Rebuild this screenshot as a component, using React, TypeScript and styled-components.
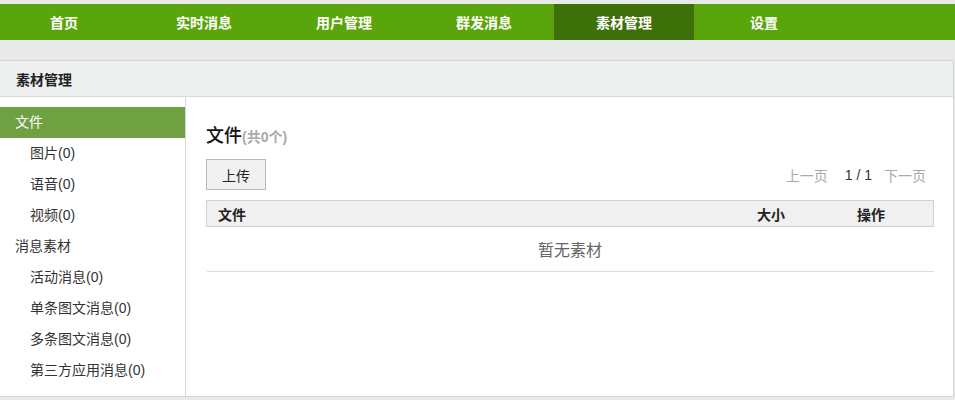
import React from "react";
import styled, { createGlobalStyle } from "styled-components";

const Global = createGlobalStyle`
  html, body { margin: 0; padding: 0; }
  body {
    background: #e8e9e9;
    font-family: "Liberation Sans", Arial, "Noto Sans CJK SC", sans-serif;
    font-size: 14px;
    color: #333;
    overflow: hidden;
  }
`;

const Page = styled.div`
  padding-top: 4px;
  width: 955px;
  height: 400px;
  box-sizing: border-box;
  overflow: hidden;
`;

const Nav = styled.nav`
  display: flex;
  height: 36px;
  background: #5ba50c;
  overflow: hidden;
`;

const NavTrack = styled.div`
  display: flex;
  margin-left: -6px;
`;

const NavItem = styled.a<{ $active?: boolean }>`
  width: 140px;
  height: 36px;
  display: flex;
  align-items: center;
  justify-content: center;
  color: #fff;
  font-weight: bold;
  font-size: 14px;
  text-decoration: none;
  background: ${(p) => (p.$active ? "#3d7008" : "transparent")};
`;

const Panel = styled.section`
  margin: 20px 1px 0 -1px;
  border: 1px solid #d5d5d5;
  background: #fff;
  height: 337px;
  box-sizing: border-box;
  display: flex;
  flex-direction: column;
`;

const PanelHeader = styled.header`
  height: 35px;
  background: #eef0ef;
  border-bottom: 1px solid #d8d8d8;
  display: flex;
  align-items: center;
  padding-left: 16px;
  font-weight: bold;
  font-size: 14px;
  color: #222;
  flex-shrink: 0;
`;

const Body = styled.div`
  display: flex;
  flex: 1;
  min-height: 0;
`;

const Sidebar = styled.ul`
  list-style: none;
  margin: 0;
  padding: 10px 0 0 0;
  width: 185px;
  border-right: 1px solid #d8d8d8;
  flex-shrink: 0;
`;

const SideItem = styled.li<{ $level: number; $active?: boolean }>`
  height: 31px;
  line-height: 31px;
  padding-left: ${(p) => (p.$level === 1 ? 15 : 30)}px;
  background: ${(p) => (p.$active ? "#6fa143" : "transparent")};
  color: ${(p) => (p.$active ? "#fff" : "#333")};
  font-size: 14px;
  cursor: pointer;
`;

const Main = styled.div`
  flex: 1;
  padding: 25px 19px 0 20px;
`;

const Title = styled.h2`
  margin: 0;
  font-size: 18px;
  font-weight: 500;
  color: #111;
  line-height: 24px;
  font-family: "Noto Sans CJK SC", sans-serif;
`;

const Count = styled.span`
  font-size: 14px;
  font-weight: bold;
  color: #aaa;
  font-family: "Liberation Sans", Arial, "Noto Sans CJK SC", sans-serif;
`;

const Toolbar = styled.div`
  display: flex;
  justify-content: space-between;
  align-items: center;
  margin-top: 10px;
`;

const Button = styled.button`
  width: 60px;
  height: 31px;
  background: #f1f1f1;
  border: 1px solid #b9b9b9;
  font-size: 14px;
  color: #222;
  font-family: "Noto Sans CJK SC", sans-serif;
  padding: 0;
`;

const Pager = styled.div`
  display: flex;
  align-items: center;
  margin-right: 8px;
  font-size: 14px;
`;

const PagerLink = styled.span`
  color: #aaa;
`;

const PagerNum = styled.span`
  color: #333;
  margin: 0 12px 0 17px;
`;

const Table = styled.table`
  margin-top: 10px;
  width: 100%;
  border-collapse: collapse;
`;

const Th = styled.th<{ $w?: number }>`
  background: #f0f0f0;
  border-top: 1px solid #d2d2d2;
  border-bottom: 1px solid #d2d2d2;
  height: 25px;
  text-align: left;
  font-size: 14px;
  font-weight: bold;
  color: #222;
  padding: 0 0 0 ${(p) => (p.$w === undefined ? 11 : 0)}px;
  width: ${(p) => (p.$w ? `${p.$w}px` : "auto")};
  &:first-child { border-left: 1px solid #d2d2d2; }
  &:last-child { border-right: 1px solid #d2d2d2; }
`;

const Empty = styled.td`
  height: 44px;
  padding: 0;
  text-align: center;
  font-size: 16px;
  color: #666;
  border-bottom: 1px solid #dcdcdc;
`;

const sideItems: { label: string; level: number; active?: boolean }[] = [
  { label: "文件", level: 1, active: true },
  { label: "图片(0)", level: 2 },
  { label: "语音(0)", level: 2 },
  { label: "视频(0)", level: 2 },
  { label: "消息素材", level: 1 },
  { label: "活动消息(0)", level: 2 },
  { label: "单条图文消息(0)", level: 2 },
  { label: "多条图文消息(0)", level: 2 },
  { label: "第三方应用消息(0)", level: 2 },
];

const navItems = ["首页", "实时消息", "用户管理", "群发消息", "素材管理", "设置"];

export default function App() {
  return (
    <Page>
      <Global />
      <Nav>
        <NavTrack>
          {navItems.map((n) => (
            <NavItem key={n} $active={n === "素材管理"}>
              {n}
            </NavItem>
          ))}
        </NavTrack>
      </Nav>
      <Panel>
        <PanelHeader>素材管理</PanelHeader>
        <Body>
          <Sidebar>
            {sideItems.map((s) => (
              <SideItem key={s.label} $level={s.level} $active={s.active}>
                {s.label}
              </SideItem>
            ))}
          </Sidebar>
          <Main>
            <Title>
              文件<Count>(共0个)</Count>
            </Title>
            <Toolbar>
              <Button>上传</Button>
              <Pager>
                <PagerLink>上一页</PagerLink>
                <PagerNum>1 / 1</PagerNum>
                <PagerLink>下一页</PagerLink>
              </Pager>
            </Toolbar>
            <Table>
              <thead>
                <tr>
                  <Th>文件</Th>
                  <Th $w={100}>大小</Th>
                  <Th $w={76}>操作</Th>
                </tr>
              </thead>
              <tbody>
                <tr>
                  <Empty colSpan={3}>暂无素材</Empty>
                </tr>
              </tbody>
            </Table>
          </Main>
        </Body>
      </Panel>
    </Page>
  );
}
